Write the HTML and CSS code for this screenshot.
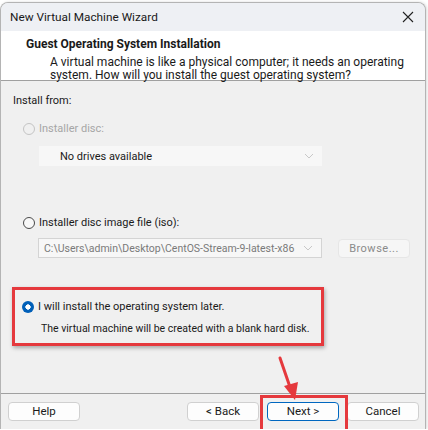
FILE: index.html
```html
<!DOCTYPE html>
<html lang="en">
<head>
    <meta charset="UTF-8">
    <title>New Virtual Machine Wizard</title>
    <link rel="stylesheet" href="styles.css">
</head>
<body>
    <div class="window">
        <div class="titlebar">
            <span class="title">New Virtual Machine Wizard</span>
            <svg class="close" width="12" height="12" viewBox="0 0 12 12">
                <path d="M1 1 L11 11 M11 1 L1 11" stroke="#222" stroke-width="1.1" fill="none"/>
            </svg>
        </div>

        <div class="header">
            <div class="header-title">Guest Operating System Installation</div>
            <div class="header-desc">A virtual machine is like a physical computer; it needs an operating<br>system. How will you install the guest operating system?</div>
        </div>

        <div class="content">
            <div class="label">Install from:</div>

            <div class="option disabled">
                <span class="radio"></span>
                <span>Installer disc:</span>
            </div>
            <div class="select drives">
                <span>No drives available</span>
                <svg class="chev" width="10" height="6" viewBox="0 0 10 6"><path d="M1 1 L5 5 L9 1" stroke="#c8c8c8" fill="none"/></svg>
            </div>

            <div class="option iso">
                <span class="radio"></span>
                <span>Installer disc image file (iso):</span>
            </div>
            <div class="iso-row">
                <div class="select path">
                    <span>C:\Users\admin\Desktop\CentOS-Stream-9-latest-x86</span>
                    <svg class="chev" width="10" height="6" viewBox="0 0 10 6"><path d="M1 1 L5 5 L9 1" stroke="#c8c8c8" fill="none"/></svg>
                </div>
                <div class="btn browse">Browse...</div>
            </div>

            <div class="highlight">
                <div class="option checked">
                    <span class="radio"></span>
                    <span>I will install the operating system later.</span>
                </div>
                <div class="later-note">The virtual machine will be created with a blank hard disk.</div>
            </div>
        </div>

        <div class="footer">
            <div class="btn">Help</div>
            <div class="spacer"></div>
            <div class="btn">&lt; Back</div>
            <div class="next-wrap">
                <div class="btn primary">Next &gt;</div>
            </div>
            <div class="btn">Cancel</div>
        </div>

        <svg class="arrow" width="30" height="50" viewBox="0 0 30 50">
            <path d="M4 2 L15 34" stroke="#e5393d" stroke-width="3" fill="none" stroke-linecap="round"/>
            <path d="M8 30 L19 44 L22 26 Z" fill="#e5393d"/>
        </svg>
    </div>
</body>
</html>
```

FILE: styles.css
```css
body {
    margin: 0;
    background: #ffffff;
    font-family: Roboto, "Noto Sans", sans-serif;
    font-size: 11px;
    color: #1a1a1a;
    white-space: nowrap;
}
.window {
    position: relative;
    margin-top: 2px;
    width: 424px;
    height: 426px;
    border: 1px solid #b4b4b4;
    border-bottom: none;
    border-radius: 8px 8px 0 0;
    background: #f0f0f0;
    box-shadow: 1px 0 3px rgba(0,0,0,0.15);
    overflow: hidden;
    display: flex;
    flex-direction: column;
}
.titlebar {
    height: 28px;
    background: #eef0f4;
    display: flex;
    align-items: center;
    justify-content: space-between;
    padding: 0 10px 0 9px;
}
.title {
    font-size: 11.8px;
}
.close {
    margin-right: 1px;
}
.header {
    height: 50px;
    background: #ffffff;
    border-bottom: 1px solid #a0a0a0;
    padding: 6px 0 0 25px;
    box-sizing: border-box;
    font-size: 12px;
}
.header-title {
    font-weight: bold;
    line-height: 15px;
    margin-bottom: 4px;
}
.header-desc {
    padding-left: 24px;
    line-height: 12.5px;
}
.content {
    flex: 1;
    padding: 12px 0 0 12px;
    border-bottom: 1px solid #a0a0a0;
}
.label {
    line-height: 16px;
}
.option {
    display: flex;
    align-items: center;
    gap: 4px;
    padding-left: 10px;
    line-height: 16px;
}
.option.disabled {
    margin-top: 12px;
    color: #a6a6a6;
}
.radio {
    width: 12px;
    height: 12px;
    border: 1px solid #4a4a4a;
    border-radius: 50%;
    background: #f8f8f8;
    box-sizing: border-box;
}
.disabled .radio {
    border-color: #c4c4c4;
    background: #f0f0f0;
}
.checked .radio {
    border: none;
    background: radial-gradient(circle, #ffffff 0 2.4px, #005fb8 2.9px);
}
.select {
    display: flex;
    align-items: center;
    justify-content: space-between;
    height: 20px;
    box-sizing: border-box;
    background: #f7f7f7;
    padding: 0 8px 0 21px;
}
.drives {
    margin: 9px 0 0 26px;
    width: 283px;
}
.option.iso {
    margin-top: 49px;
}
.iso-row {
    display: flex;
    align-items: center;
    margin: 7px 0 0 25px;
    gap: 16px;
}
.path {
    width: 284px;
    border: 1px solid #d4d4d4;
    padding-left: 5px;
    color: #7a7a7a;
    font-size: 10.5px;
}
.btn {
    width: 72px;
    height: 19px;
    box-sizing: border-box;
    border: 1px solid #d0d0d0;
    border-radius: 4px;
    background: #fdfdfd;
    display: flex;
    align-items: center;
    justify-content: center;
}
.browse {
    background: #f6f6f6;
    border-color: #e6e6e6;
    color: #8a8a8a;
    letter-spacing: 0.5px;
}
.highlight {
    margin: 29px 0 0 -1px;
    width: 312px;
    height: 59px;
    box-sizing: border-box;
    border: 3px solid #e5393d;
    box-shadow: 1px 2px 4px rgba(0,0,0,0.3);
    padding-top: 9px;
}
.highlight .option {
    padding-left: 7px;
}
.later-note {
    padding-left: 26px;
    margin-top: 6px;
    line-height: 16px;
    font-size: 10.5px;
}
.footer {
    height: 34px;
    display: flex;
    align-items: center;
    padding: 0 6px 1px 7px;
    gap: 8px;
    font-size: 11.5px;
}
.spacer {
    flex: 1;
}
.next-wrap {
    position: relative;
}
.next-wrap::after {
    content: "";
    position: absolute;
    left: -7px;
    top: -7px;
    right: -9px;
    bottom: -12px;
    border: 3px solid #e5393d;
}
.primary {
    border: 1px solid #0067c0;
}
.arrow {
    position: absolute;
    left: 275px;
    top: 353px;
}
```
